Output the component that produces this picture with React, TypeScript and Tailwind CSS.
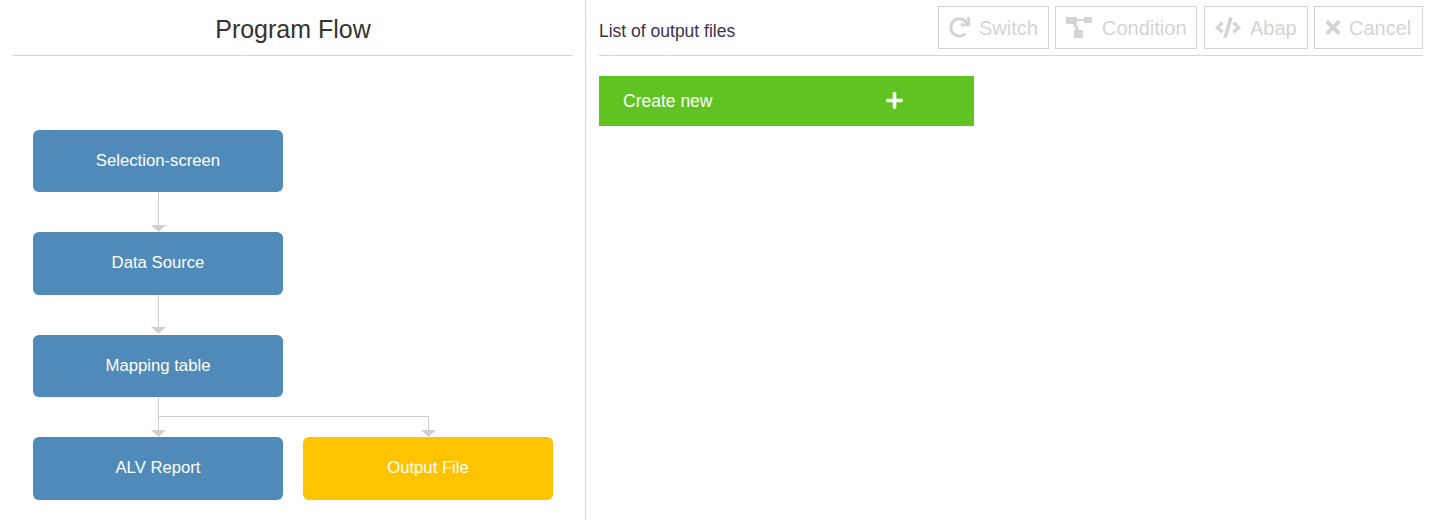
import { FaCode, FaRedo, FaTimes, FaPlus } from "react-icons/fa";

function Node({ label, color = "bg-[#508ab8]" }: { label: string; color?: string }) {
  return (
    <div className={`w-[250px] h-[62.4px] rounded-[6px] flex items-center justify-center text-white text-[16.7px] ${color}`}>
      <span className="relative -top-[0.6px]">{label}</span>
    </div>
  );
}

function ToolButton({ icon, label, className }: { icon: React.ReactNode; label: string; className: string }) {
  return (
    <button className={`h-[43px] border border-[#d4d4d4] flex items-center text-[#d4d4d4] text-[20px] ${className}`}>
      {icon}
      <span>{label}</span>
    </button>
  );
}

function Arrow({ x, y }: { x: number; y: number }) {
  return <polygon points={`${x - 7.5},${y} ${x + 7.5},${y} ${x},${y + 7}`} fill="#d0d0d0" />;
}

export default function App() {
  return (
    <div className="w-[1435px] h-[520px] flex overflow-hidden bg-white font-['Liberation_Sans',Arial,sans-serif] text-[#333]">
      <div className="w-[586px] h-full border-r border-[#d4d4d4] pl-[13px] pr-[12px]">
        <div className="h-[56px] border-b border-[#d4d4d4] flex items-center justify-center text-[25px] pt-[5px]">
          Program Flow
        </div>
        <div className="relative mt-[74px] ml-[20px] w-[520px] flex flex-col gap-[40px]">
          <Node label="Selection-screen" />
          <Node label="Data Source" />
          <Node label="Mapping table" />
          <div className="flex gap-[20px]">
            <Node label="ALV Report" />
            <Node label="Output File" color="bg-[#ffc300]" />
          </div>
          <svg className="absolute left-0 top-0 pointer-events-none" width="520" height="370" fill="none">
            <g stroke="#d0d0d0" strokeWidth="1">
              <path d="M125.5 62V95" />
              <path d="M125.5 165V198" />
              <path d="M125.5 267V300" />
              <path d="M125.5 286.5H395.5V300" />
            </g>
            <Arrow x={125.5} y={95} />
            <Arrow x={125.5} y={197} />
            <Arrow x={125.5} y={300} />
            <Arrow x={395.5} y={300} />
          </svg>
        </div>
      </div>
      <div className="w-[824px] ml-[13px]">
        <div className="h-[56px] border-b border-[#d4d4d4] flex items-start justify-between">
          <div className="text-[17.5px] mt-[21px] leading-[20px] text-[#3a3348]">List of output files</div>
          <div className="flex mt-[6px]">
            <ToolButton
              className="w-[111px] pl-[10px] gap-[9px] mr-[6px]"
              label="Switch"
              icon={<FaRedo className="w-[21px] h-[21px]" />}
            />
            <ToolButton
              className="w-[142px] pl-[10px] gap-[10px] mr-[7px]"
              label="Condition"
              icon={
                <svg width="26" height="21" viewBox="0 0 26 21" fill="#d4d4d4">
                  <rect x="0" y="0" width="11" height="7" />
                  <rect x="18" y="0" width="8" height="6" />
                  <rect x="8" y="13" width="9" height="8" />
                  <path d="M10 2h9v2h-9zM6 5l3-1 4.5 10-2.5 1z" />
                </svg>
              }
            />
            <ToolButton
              className="w-[104px] pl-[10px] gap-[9px] mr-[6px]"
              label="Abap"
              icon={<FaCode className="w-[26px] h-[21px]" />}
            />
            <ToolButton
              className="w-[109px] pl-[10px] gap-[8px]"
              label="Cancel"
              icon={<FaTimes className="w-[16px] h-[21px]" />}
            />
          </div>
        </div>
        <button className="mt-[20px] w-[375px] h-[50px] bg-[#5fc421] text-white text-[17.5px] flex items-center relative pl-[24px]">
          <span>Create new</span>
          <FaPlus className="absolute left-[286px] top-[15px] w-[19px] h-[19px]" />
        </button>
      </div>
    </div>
  );
}
